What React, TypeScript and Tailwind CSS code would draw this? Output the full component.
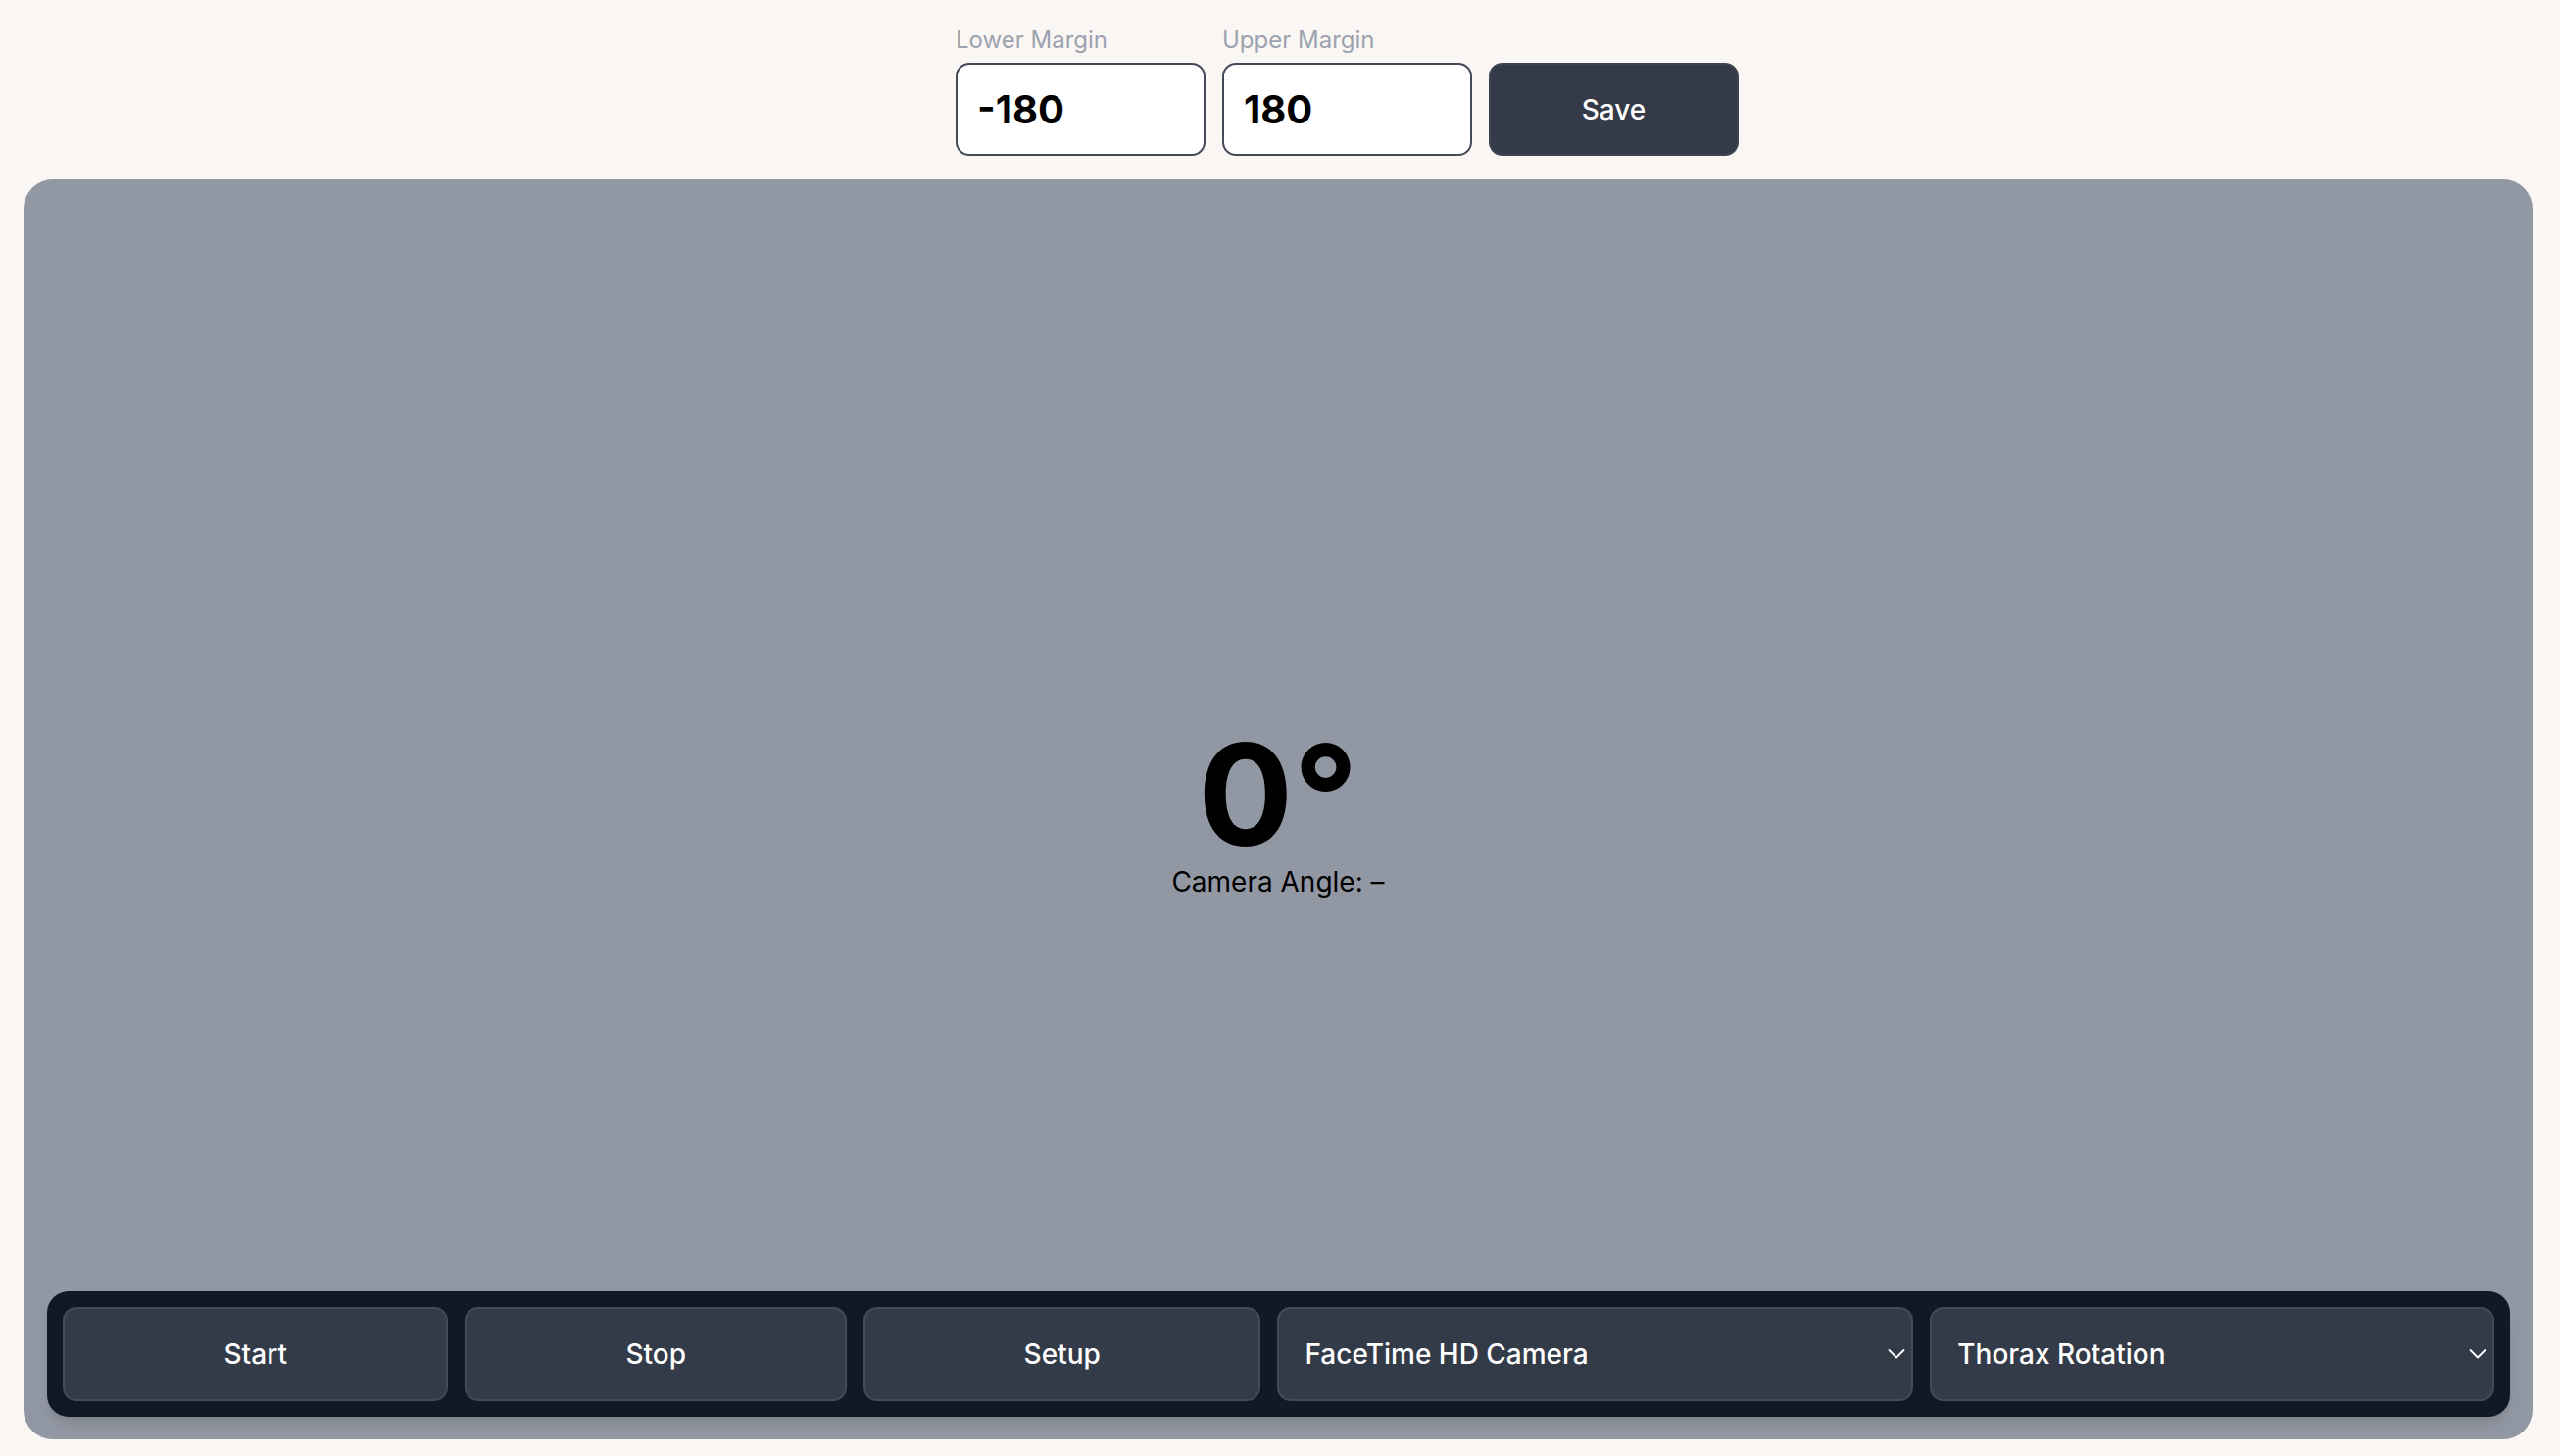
import React, { useState } from 'react';

const Chevron = () => (
  <svg width="18" height="11" viewBox="0 0 18 11" fill="none" className="shrink-0">
    <path d="M1.5 1.5L9 9L16.5 1.5" stroke="white" strokeWidth="1.8" strokeLinecap="round" strokeLinejoin="round" />
  </svg>
);

const App = () => {
  const [lower, setLower] = useState("-180");
  const [upper, setUpper] = useState("180");
  const [camera, setCamera] = useState("facetime");
  const [mode, setMode] = useState("thorax");

  return (
    <div className="min-h-screen w-full bg-[#faf6f3] font-['Inter','Liberation_Sans',sans-serif] pb-[17px]">
      {/* Margin inputs */}
      <div className="flex items-end gap-[17px] pl-[975px] pt-[25px]">
        <label className="flex flex-col w-[255px]">
          <span className="text-[24px] leading-[32px] text-[#9ca3af] mb-[7px]">Lower Margin</span>
          <input
            value={lower}
            onChange={(e) => setLower(e.target.value)}
            className="h-[95px] w-full rounded-[14px] border-2 border-[#434a58] bg-white pl-[20px] text-[40px] font-bold text-black outline-none"
          />
        </label>
        <label className="flex flex-col w-[255px]">
          <span className="text-[24px] leading-[32px] text-[#9ca3af] mb-[7px]">Upper Margin</span>
          <input
            value={upper}
            onChange={(e) => setUpper(e.target.value)}
            className="h-[95px] w-full rounded-[14px] border-2 border-[#434a58] bg-white pl-[20px] text-[40px] font-bold text-black outline-none"
          />
        </label>
        <button className="h-[95px] w-[255px] rounded-[14px] border-2 border-[#3d4452] bg-[#343a47] text-[28px] font-medium text-white">
          Save
        </button>
      </div>

      {/* Camera panel */}
      <div className="relative ml-6 mr-[28px] mt-6 h-[1286px] rounded-[30px] bg-[#9298a3]">
        <div className="flex h-full flex-col items-center justify-center">
          <div className="text-[144px] font-bold leading-none text-black">0°</div>
          <div className="mt-[3px] text-[28px] leading-[28px] text-black">Camera Angle: –</div>
        </div>

        {/* Control bar */}
        <div className="absolute left-6 right-[23px] bottom-[23px] grid grid-cols-[393fr_389fr_405fr_648fr_575fr] gap-[17px] rounded-[22px] bg-[#111827] p-4 shadow-lg">
          <button className="h-[96px] rounded-[14px] border-2 border-[#434b5a] bg-[#333a48] text-[28px] font-medium text-white">
            Start
          </button>
          <button className="h-[96px] rounded-[14px] border-2 border-[#434b5a] bg-[#333a48] text-[28px] font-medium text-white">
            Stop
          </button>
          <button className="h-[96px] rounded-[14px] border-2 border-[#434b5a] bg-[#333a48] text-[28px] font-medium text-white">
            Setup
          </button>
          <div className="relative h-[96px]">
            <select
              value={camera}
              onChange={(e) => setCamera(e.target.value)}
              className="h-full w-full appearance-none rounded-[14px] border-2 border-[#434b5a] bg-[#333a48] pl-[26px] text-[28px] font-medium text-white outline-none"
            >
              <option value="facetime">FaceTime HD Camera</option>
            </select>
            <div className="pointer-events-none absolute right-[8px] top-1/2 -translate-y-1/2">
              <Chevron />
            </div>
          </div>
          <div className="relative h-[96px]">
            <select
              value={mode}
              onChange={(e) => setMode(e.target.value)}
              className="h-full w-full appearance-none rounded-[14px] border-2 border-[#434b5a] bg-[#333a48] pl-[26px] text-[28px] font-medium text-white outline-none"
            >
              <option value="thorax">Thorax Rotation</option>
            </select>
            <div className="pointer-events-none absolute right-[8px] top-1/2 -translate-y-1/2">
              <Chevron />
            </div>
          </div>
        </div>
      </div>
    </div>
  );
};

export default App;
